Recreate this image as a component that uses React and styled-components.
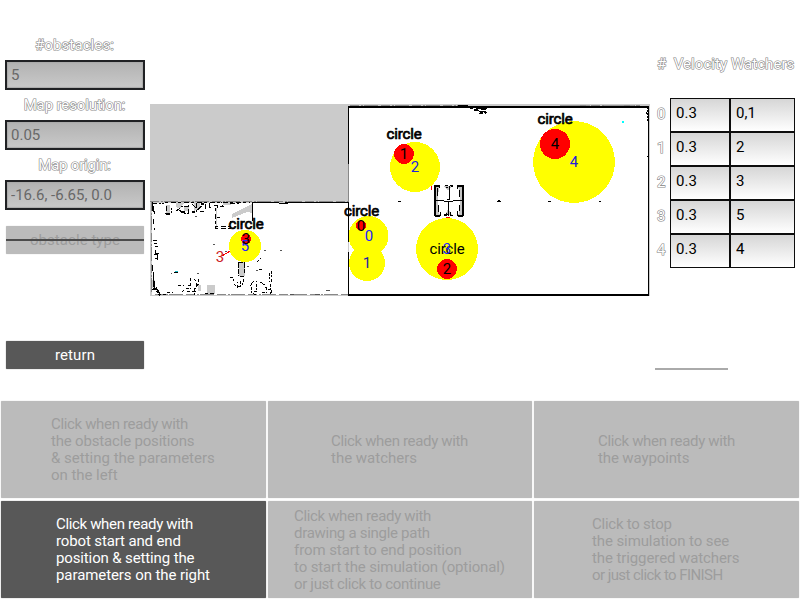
import React from "react";
import styled, { createGlobalStyle, css } from "styled-components";

const GlobalStyle = createGlobalStyle`
  * { box-sizing: border-box; }
  body { margin: 0; background: #fff; font-family: Roboto, "Liberation Sans", sans-serif; font-size: 15px; }
`;

const Page = styled.div`
  width: 800px;
  height: 600px;
  overflow: hidden;
  display: grid;
  grid-template-rows: 400px 200px;
`;

const Workspace = styled.main`
  display: grid;
  grid-template-columns: 150px 500px 150px;
`;

const outlined = css`
  color: #fff;
  -webkit-text-stroke: 1.2px #858585;
  paint-order: stroke fill;
`;

const Parameters = styled.aside`
  display: flex;
  flex-direction: column;
  padding: 30px 5px 0;
`;

const FieldLabel = styled.label`
  ${outlined}
  height: 30px;
  line-height: 30px;
  text-align: center;
  text-indent: -1px;
  letter-spacing: ${(p) => p.$spacing || 0}px;
`;

const Field = styled.input`
  display: block;
  width: 140px;
  height: 30px;
  padding: 0 4px;
  border: 2px solid #202124;
  border-radius: 0;
  outline: none;
  background: linear-gradient(#b2b2b2, #c9c9c9);
  box-shadow: inset 0 0 1px 1px #aaa;
  color: #686868;
  font: 15px Roboto, sans-serif;
`;

const SideButton = styled.button`
  width: 138px;
  height: 28px;
  margin: ${(p) => p.$top}px 1px 0;
  padding: 0;
  border: 0;
  border-radius: 1px;
  font: 15px/28px Roboto, sans-serif;
  letter-spacing: ${(p) => (p.$off ? 0.05 : 0.1)}px;
  color: ${(p) => (p.$off ? "#9d9d9d" : "#fff")};
  background: ${(p) => (p.$off ? "#bbb" : "#585858")};
  box-shadow: 0 0 1px ${(p) => (p.$off ? "#bbb" : "#585858")};
  position: relative;
`;

const Strike = styled.span`
  position: absolute;
  left: 0;
  right: 0;
  top: 13px;
  height: 2px;
  background: #4b4b4b;
`;

const MapArea = styled.section`
  padding-top: 100px;
  svg { display: block; }
`;

const Watchers = styled.aside`
  display: flex;
  flex-direction: column;
  padding: 55px 4px 0 5px;
`;

const WatchHeader = styled.div`
  ${outlined}
  height: 43px;
  line-height: 18px;
  padding-left: 2px;
  white-space: pre;
  letter-spacing: 0.05px;
`;

const WatchRow = styled.div`
  display: grid;
  grid-template-columns: 15px 60px 65px;
  height: 34px;
`;

const Index = styled.span`
  ${outlined}
  line-height: 33px;
  padding-left: 2px;
`;

const Cell = styled.input`
  min-width: 0;
  height: 34px;
  padding: 0 5px 4px;
  border: 1px solid #0d0d0d;
  outline: 1px solid #0d0d0d;
  outline-offset: ${(p) => (p.$last ? -1 : 0)}px;
  border-radius: 0;
  background: linear-gradient(#d6d6d6, #fff);
  color: #000;
  font: 15px Roboto, sans-serif;
`;

const Underline = styled.div`
  width: 73px;
  height: 2px;
  margin-top: 100px;
  background: #aaa;
`;

const Steps = styled.footer`
  display: grid;
  grid-template-columns: 265px 264px 265px;
  grid-template-rows: 97px 97px;
  column-gap: 2px;
  row-gap: 3px;
  padding: 1px;
`;

const StepButton = styled.button`
  display: flex;
  flex-direction: column;
  align-items: flex-start;
  justify-content: center;
  padding: 1px 0 0 ${(p) => p.$indent}px;
  border: 0;
  border-radius: 1px;
  box-shadow: 0 0 1px ${(p) => (p.$active ? "#585858" : "#bbb")};
  background: ${(p) => (p.$active ? "#585858" : "#bbb")};
  color: ${(p) => (p.$active ? "#fff" : "#9d9d9d")};
  font: 15px/17px Roboto, sans-serif;
  text-align: left;
  white-space: pre;
`;

const StepLine = styled.span`
  letter-spacing: ${(p) => p.$spacing}px;
`;

const MapText = styled.text`
  font: 15px Roboto, sans-serif;
  text-anchor: middle;
  letter-spacing: -0.15px;
  fill: ${(p) => p.$color || "#000"};
  stroke: #000;
  stroke-width: ${(p) => (p.$heavy ? 0.7 : 0)};
`;

const zones = [
  [368.5, 236, 20], [367, 263, 18], [415, 167, 25], [447, 249, 31], [574, 162, 41], [245, 246, 16],
];
const obstacles = [
  [361, 225.5, 5], [404, 154, 10], [447, 269, 10], [246, 239, 5], [555, 144, 15],
];

function MapView() {
  return (
    <svg width="500" height="200" viewBox="150 100 500 200">
      <g shapeRendering="crispEdges">
        <path fill="#cbcbcb" d="M150 104h500v192H150z" />
        <path fill="#fff" d="M152 203h196v92H152zM349 107h299v187H349z" />
        <path fill="#cbcbcb" d="M232 214l20-10v9l-5-1-15 6zM194 203h6v5l-6 3zM176 203h8l-4 6-4-2zM239 262h6v14h-6zM207 285h8v9h-8zM223 203h8v2h-8zM166 205h4v8h-4zM184 206h5v5h-5zM152 280h3v8h-3zM198 285h3v6h-3zM216 208h1v20h-1z" />
        <g fill="none" stroke="#000">
          <path d="M348.5 106v58M348.5 201v41M348.5 252v43M648.5 106v189" />
          <path stroke="#888" d="M348.5 164v38" />
          <path strokeWidth="2" d="M348 107h301M348 295h301" />
          <path d="M252.5 202.5v18M252 202.5h27M279 203.5h9M285 202.5h63" />
          <path stroke="#888" d="M150 201.5h200M151.5 202v92M155 294.5h193M350 105.5h110M560 105.5h80" strokeDasharray="9 2 2 1 14 3" />
          <path d="M152.5 202v9M153.5 206v5M152.5 211h2v3M153.5 219v5M154.5 228v2M153 240.5h4M154 243.5h3M155 246.5h3M155.5 250v3h3M153.5 254h4v6M155 258.5h3M152.5 265v6M153.5 272v15M154.5 281v7M152 289.5h5v3h2v3M156 287l3 5" />
          <path d="M152 203.5h12M166.5 206v5l3 4M165 213.5h6v-6M176 211l7-5h5M178 209l5 4h5v-9M192 204l6 6M196.5 203v8l6-6M200 211.5h4M205.5 204v6M209.5 203v4h3M214 205.5h3v3M220 206.5h3l-2-4M230 203.5h9" strokeDasharray="5 2 2 1" />
          <path strokeDasharray="3 3 5 2" d="M165 202.5h85M215.5 208v20M215 226.5h17M215 228.5h18M217 217.5h5M230.5 221v7" />
          <path d="M166 214h4M181 212h4M192 212h3M201 204h3" strokeWidth="2" />
          <path d="M238.5 263v13M244.5 263v10M238 262.5h7M240 276.5h4" strokeDasharray="5 1" />
          <path d="M153 288.5h3M156 291.5h4M158 294.5h8M167 292.5h6M178 285.5h6M182 292l4-4h5M188 285.5h4M190.5 278v8M194 279l4 4M196.5 283v5M187 291.5h10M198.5 279v5l-4 5v6M205 293.5h10" strokeDasharray="3 2 4 1" />
          <path d="M230 277.5h3v4M234 284l3 3v-5M238 286.5h4M240.5 281v6M244 279l-2 6M250 286l4-5h3M251.5 287v6l5 2M256.5 284v6M260 282l5 3 2 5 4-1v5M254 291.5h4M262 292.5h5M269.5 273v9M271.5 271v11M270.5 284v10M259 269.5h3M257 262l4-4h2" strokeDasharray="3 1 2 2" />
          <path stroke="#555" d="M195 216h2M213 244h2M171 273h1M197 273h2M225 251h2M264 250h2M280 250h2M290 294h4M315 294h5M326 290h4M256 270h2M247 266h2" />
          <path d="M398 201.5h3M497 201.5h4M498 200.5h2M548 201.5h3M599 201.5h2" />
          <path stroke="#999" d="M560 105.5h80" strokeDasharray="20 6 4 14" />
          <path d="M458 105.5h10M467 106.5h5M470 108.5h3M474 109.5h4M476 108.5h11M474 110.5h5M481 109.5h5M479 111.5h7M480 112.5h3M484 112.5h3M479 113.5h4M485 113.5h1" />
          <path d="M647.5 107v15M646.5 112v3" strokeDasharray="2 1" />
          <path d="M647 156.5h2" />
        </g>
        <path fill="#c4c4c4" d="M436 186h4l-2 8v13l2 9h-4zM458 186h4v30h-4l2-9v-12zM444 186h8l-3 4h-2zM445 215l3-6 4 6z" />
        <g fill="none" stroke="#000">
          <path strokeWidth="2" d="M435 185v31M463 185v31M434 186h5M458 186h5M435 216h5M458 216h5" />
          <path d="M439.5 185v3M437.5 188v8M438.5 205v7M440.5 212v4M457.5 185v4M459.5 190v7M459.5 205v6M457.5 211v5M449.5 186v14M448.5 201v15M435 200.5h9M444 201.5h9M453 200.5h10M447 199.5h3M445 185.5h3M450 185.5h3M446 187.5h2M451 186.5h2M444 214.5h4M446.5 213v2M450.5 212v3M444 215.5h3M450 215.5h3" />
        </g>
        <path fill="#16b8c2" d="M175 271h3v1h-3z" />
        <path d="M174 272h4v1h-4z" />
        <path fill="#0ff" d="M622 121h2v2h-2z" />
        <path fill="red" d="M431 186h1v4h-1zM446 217h4v1h-4z" />
        <g fill="#ff0">
          {zones.map(([x, y, r], i) => <circle key={i} cx={x} cy={y} r={r} />)}
        </g>
        <g fill="red">
          {obstacles.map(([x, y, r], i) => <circle key={i} cx={x} cy={y} r={r} />)}
        </g>
        <path stroke="red" d="M222 256l8-5" />
      </g>
      <MapText x="369" y="241" $color="#22f">0</MapText>
      <MapText x="367" y="268" $color="#22a">1</MapText>
      <MapText x="415" y="172" $color="#22d">2</MapText>
      <MapText x="574" y="167" $color="#22d">4</MapText>
      <MapText x="245" y="251" $color="#22f">5</MapText>
      <MapText x="404" y="139" $heavy>circle</MapText>
      <MapText x="361.5" y="216" $heavy>circle</MapText>
      <MapText x="555" y="124" $heavy>circle</MapText>
      <MapText x="246" y="229" $heavy>circle</MapText>
      <MapText x="447" y="254">circle</MapText>
      <MapText x="404" y="159">1</MapText>
      <MapText x="361" y="231">0</MapText>
      <MapText x="246" y="244">3</MapText>
      <MapText x="447" y="274">2</MapText>
      <MapText x="555" y="149">4</MapText>
      <MapText x="447" y="254" $color="#22f">3</MapText>
      <MapText x="220" y="262" $color="#c22">3</MapText>
    </svg>
  );
}

const fields = [
  ["#obstacles:", "5", 0.1],
  ["Map resolution:", "0.05", -0.12],
  ["Map origin:", "-16.6, -6.65, 0.0", -0.2],
];
const watchers = [["0.3", "0,1"], ["0.3", "2"], ["0.3", "3"], ["0.3", "5"], ["0.3", "4"]];
const ready = ["Click when ready with", -0.34];
const steps = [
  { indent: 50, lines: [ready, ["the obstacle positions", -0.18], ["& setting the parameters", 0], ["on the left", -0.05]] },
  { indent: 63, lines: [ready, ["the watchers", 0]] },
  { indent: 64, lines: [ready, ["the waypoints", -0.12]] },
  { indent: 55, lines: [ready, ["robot start and end", -0.13], ["position & setting the", -0.13], ["parameters on the right", -0.08]] },
  {
    indent: 26,
    lines: [
      ready,
      ["drawing a single path", -0.29],
      ["from start to end position", -0.08],
      ["to start the simulation (optional)", -0.12],
      ["or just click to continue", -0.33],
    ],
  },
  {
    indent: 58,
    lines: [
      ["Click to stop", -0.24],
      ["the simulation to see", -0.1],
      ["the triggered watchers", -0.1],
      ["or just click to FINISH", -0.57],
    ],
  },
];

export default function App() {
  return (
    <Page>
      <GlobalStyle />
      <Workspace>
        <Parameters>
          {fields.map(([label, value, spacing]) => (
            <React.Fragment key={label}>
              <FieldLabel $spacing={spacing}>{label}</FieldLabel>
              <Field defaultValue={value} />
            </React.Fragment>
          ))}
          <SideButton $off $top={16}>obstacle type<Strike /></SideButton>
          <SideButton $top={87}>return</SideButton>
        </Parameters>
        <MapArea><MapView /></MapArea>
        <Watchers>
          <WatchHeader>{"#  Velocity Watchers"}</WatchHeader>
          {watchers.map(([velocity, ids], i) => (
            <WatchRow key={i}>
              <Index>{i}</Index>
              <Cell $last defaultValue={velocity} />
              <Cell $last defaultValue={ids} />
            </WatchRow>
          ))}
          <Underline />
        </Watchers>
      </Workspace>
      <Steps>
        {steps.map(({ indent, lines }, i) => (
          <StepButton key={i} $active={i === 3} $indent={indent}>
            {lines.map(([text, spacing]) => (
              <StepLine key={text} $spacing={spacing}>{text}</StepLine>
            ))}
          </StepButton>
        ))}
      </Steps>
    </Page>
  );
}
